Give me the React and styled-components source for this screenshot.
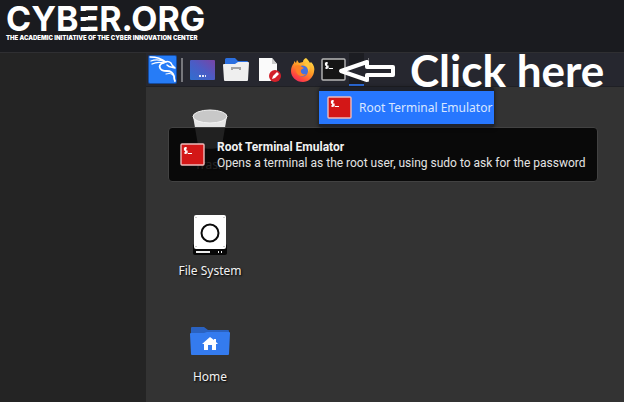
import React from 'react';
import styled, { createGlobalStyle } from 'styled-components';

const GlobalStyle = createGlobalStyle`
  * {
    box-sizing: border-box;
  }

  body {
    margin: 0;
    background: #242424;
    font-family: 'Noto Sans', 'Open Sans', sans-serif;
    font-size: 12px;
    line-height: 16px;
    color: #fff;
  }
`;

const Page = styled.div`
  display: flex;
  flex-direction: column;
  min-height: 100vh;
`;

const Header = styled.header`
  height: 53px;
  padding: 4px 6px 0;
  background: #1a1b1f;
  border-bottom: 1px solid #2f2f32;
  font-family: Inter, sans-serif;
  white-space: nowrap;
`;

const Brand = styled.h1`
  margin: 0;
  font-size: 34px;
  font-weight: 700;
  line-height: 30px;
`;

// the E of the logo has no stem, only its three bars
const BarLetter = styled.span`
  position: relative;

  &::before,
  &::after {
    content: '';
    position: absolute;
    left: 0;
    width: 9px;
    height: 6px;
    background: #1a1b1f;
  }

  &::before {
    top: 13px;
  }

  &::after {
    top: 23px;
  }
`;

const Tagline = styled.p`
  margin: 0;
  font-size: 6px;
  font-weight: 900;
  line-height: 8px;
`;

const Body = styled.div`
  flex: 1;
  display: flex;
`;

const Sidebar = styled.aside`
  flex: 0 0 146px;
  background: #242424;
`;

const Main = styled.main`
  position: relative;
  flex: 1;
  min-width: 0;
  display: flex;
  flex-direction: column;
  background: #333;
`;

const Panel = styled.nav`
  display: flex;
  align-items: center;
  height: 34px;
  padding-left: 2px;
  background: #26272f;
  border-bottom: 1px solid #1f2025;
`;

const PanelButton = styled.button`
  display: flex;
  align-items: center;
  justify-content: center;
  flex: none;
  width: ${props => props.$width || 34}px;
  height: 33px;
  padding: 0;
  border: 0;
  border-bottom: ${props => (props.$active ? '2px solid #2b69d6' : '0')};
  background: ${props => (props.$active ? '#1c1d22' : 'transparent')};
`;

const Separator = styled.span`
  flex: none;
  width: ${props => props.$width}px;
  height: 24px;
  margin: 0 2px 0 4px;
  background: #77787d;
`;

const Annotation = styled.div`
  position: absolute;
  top: 0;
  left: 191px;
  display: flex;
  align-items: center;
  gap: 14px;
  height: 34px;
  font-family: Lato, sans-serif;
  font-size: 44px;
  font-weight: 700;
  line-height: 34px;
  white-space: nowrap;
`;

const Launcher = styled.div`
  position: absolute;
  top: 34px;
  left: 173px;
  padding: 4px 0 3px;
  background: #1f222b;
  border-radius: 3px;
  box-shadow: 0 1px 4px rgba(0, 0, 0, 0.6);
`;

const LauncherItem = styled.button`
  display: flex;
  align-items: center;
  gap: 7px;
  height: 33px;
  padding: 0 2px 0 8px;
  border: 0;
  background: #2777ff;
  color: #d9e6ff;
  font: inherit;
  white-space: nowrap;
`;

const Tooltip = styled.div`
  position: absolute;
  top: 74px;
  left: 22px;
  display: flex;
  align-items: center;
  gap: 12px;
  height: 55px;
  padding: 0 11px;
  border: 1px solid #424242;
  border-radius: 4px;
  background: rgba(4, 4, 4, 0.87);
  color: #e4e4e4;
  font-family: Roboto, 'Noto Sans', sans-serif;
  white-space: nowrap;
`;

const TooltipTitle = styled.strong`
  display: block;
  color: #f2f2f2;
`;

const Shortcuts = styled.ul`
  display: flex;
  flex-direction: column;
  gap: 40px;
  width: 80px;
  margin: 22px 0 0 24px;
  padding: 0;
  list-style: none;
`;

const Shortcut = styled.li`
  display: flex;
  flex-direction: column;
  align-items: center;
  gap: 8px;
  height: 66px;
  color: #f2f2f2;
  text-shadow: 1px 1px 2px #000;
  white-space: nowrap;
`;

const KaliIcon = () => (
  <svg width="29" height="29" viewBox="0 0 29 29">
    <rect width="29" height="29" rx="2" fill="#164c9f" />
    <rect x="1" y="1" width="27" height="27" rx="1" fill="#267cf7" />
    <g fill="none" stroke="#fff" strokeLinecap="round" strokeLinejoin="round">
      <path d="M2 2c6 0 11 1 16 5M3 6c5-2 10-1 14 1M4 9c4-2 8-2 12-1" strokeWidth="1.3" />
      <path d="M17 7c3-1 6 0 7 3l3 3-4-1c-2 0-3-1-4-2" strokeWidth="1.5" />
      <path
        d="M15 8c-3 1-4 3-3 5 1 3 4 3 7 3 4 0 6 2 7 5 0 2 0 3 1 5"
        strokeWidth="1.8"
      />
      <path d="M25 20c-2-2-4-2-7-1" strokeWidth="1.1" />
    </g>
  </svg>
);

const DesktopIcon = () => (
  <svg width="25" height="20" viewBox="0 0 25 20">
    <defs>
      <linearGradient id="screen" x1="0" y1="1" x2="1" y2="0">
        <stop offset="0" stopColor="#2f6fd0" />
        <stop offset="0.5" stopColor="#4b5cc5" />
        <stop offset="1" stopColor="#7944a5" />
      </linearGradient>
    </defs>
    <rect width="25" height="20" rx="1" fill="url(#screen)" />
    <path d="M9 15h2v2H9zM12 15h2v2h-2zM15 15h1v2h-1z" fill="#e3e5f6" />
  </svg>
);

const FilesIcon = () => (
  <svg width="26" height="23" viewBox="0 0 26 23">
    <path d="M2 1.5Q2 0 3.5 0H12l3 3h9q1 0 1 1v9H2z" fill="#2b6fe0" />
    <path d="M0 7q0-1 1-1h11l3-2h10q1 0 1 1l-1 17q0 1-1 1H2q-1 0-1-1z" fill="#efefef" />
    <path d="M9 12v-2h8v2" fill="none" stroke="#a3a3a3" strokeWidth="2" />
  </svg>
);

const DocumentIcon = () => (
  <svg width="24" height="26" viewBox="0 0 24 26">
    <path d="M1 1h13l5 6v17H1z" fill="#fafafa" />
    <path d="M14 1v6h5z" fill="#ccc" />
    <circle cx="17" cy="19" r="6" fill="#d3202a" />
    <path d="m14 22 1-3 4-4 2 2-4 4z" fill="#fff" />
  </svg>
);

const FirefoxIcon = () => (
  <svg width="24" height="24" viewBox="0 0 24 24">
    <defs>
      <linearGradient id="flame" x1="0.8" y1="0" x2="0.2" y2="1">
        <stop offset="0" stopColor="#ffe14a" />
        <stop offset="0.45" stopColor="#ff9a25" />
        <stop offset="0.8" stopColor="#ff4540" />
        <stop offset="1" stopColor="#ec2661" />
      </linearGradient>
    </defs>
    <path
      d="M15 0c2 2 3 3 4 5l1-1c3 3 4 6 3 10-1 6-6 10-11 10C5 24 0 19 0 13c0-3 1-6 3-8V3l2 2 1-3 2 3 4-1c0-2 1-3 3-4z"
      fill="url(#flame)"
    />
    <circle cx="11.5" cy="13" r="5.5" fill="#4571df" />
    <path d="M4 8c2-1 5-1 7 1l2 1c-1 1-3 1-3 2-1 3 2 5 5 4-3 4-10 2-10-4z" fill="#ff8124" />
    <path d="M13 7c3 1 5 4 4 7 2-2 2-5 1-7l-3-2z" fill="#ffc63a" />
  </svg>
);

const TerminalIcon = ({ fill = '#d31717', stroke = '#eebbbb' }) => (
  <svg width="25" height="23" viewBox="0 0 25 23">
    <rect x="1" y="1" width="23" height="21" rx="1" fill={fill} stroke={stroke} strokeWidth="1.4" />
    <path
      d="M7 5H4.500v2L7 8v2H4M5.700 4v7M8 10.500h4"
      fill="none"
      stroke="#fff"
      strokeWidth="1.2"
    />
  </svg>
);

const ArrowIcon = () => (
  <svg width="59" height="24" viewBox="0 0 59 24">
    <path
      d="M4 13 30 4v5h26v8H30v5z"
      fill="#26272f"
      stroke="#fff"
      strokeWidth="4"
      strokeLinejoin="round"
    />
  </svg>
);

const TrashIcon = () => (
  <svg width="36" height="40" viewBox="0 0 36 40">
    <path d="M1 7l5 29c1 5 23 5 24 0l5-29z" fill="#e6e6e6" />
    <ellipse cx="18" cy="7.500" rx="17" ry="6.500" fill="#c8c8c8" stroke="#f3f3f3" />
  </svg>
);

const DiskIcon = () => (
  <svg width="34" height="40" viewBox="0 0 34 40">
    <rect y="29" width="34" height="11" rx="2" fill="#080808" />
    <rect x="1" width="32" height="34" rx="2" fill="#fff" />
    <circle cx="17" cy="18" r="8.500" fill="#fff" stroke="#0b0b0b" strokeWidth="2" />
    <path d="M3 36h14v2H3zM25 36h1v2h-1zM28 36h1v2h-1z" fill="#eee" />
    <path d="M2.500 2h1v1h-1zM30.500 2h1v1h-1zM2.500 31h1v1h-1zM30.500 31h1v1h-1z" fill="#999" />
  </svg>
);

const HomeIcon = () => (
  <svg width="40" height="40" viewBox="0 0 40 40">
    <path d="M1 7q0-1 1-1h12l4 3h20q1 0 1 1v8H1z" fill="#2a62c1" />
    <path d="M0 13q0-1 1-1h13l3-1h22q1 0 1 1l-1 21q0 1-1 1H2q-1 0-1-1z" fill="#347bef" />
    <path d="m20 16-8 7h2v6h4v-5h4v5h4v-6h2l-2-2v-3h-2v1z" fill="#fff" />
  </svg>
);

const shortcuts = [
  { label: 'Trash', Icon: TrashIcon },
  { label: 'File System', Icon: DiskIcon },
  { label: 'Home', Icon: HomeIcon },
];

const App = () => (
  <Page>
    <GlobalStyle />
    <Header>
      <Brand>
        CYB<BarLetter>E</BarLetter>R.ORG
      </Brand>
      <Tagline>THE ACADEMIC INITIATIVE OF THE CYBER INNOVATION CENTER</Tagline>
    </Header>

    <Body>
      <Sidebar />
      <Main>
        <Panel>
          <PanelButton $width={29} aria-label="Applications">
            <KaliIcon />
          </PanelButton>
          <Separator $width={2} />
          <PanelButton aria-label="Show desktop">
            <DesktopIcon />
          </PanelButton>
          <PanelButton aria-label="Files">
            <FilesIcon />
          </PanelButton>
          <PanelButton aria-label="Text editor">
            <DocumentIcon />
          </PanelButton>
          <PanelButton $width={31} aria-label="Firefox">
            <FirefoxIcon />
          </PanelButton>
          <PanelButton $width={31} aria-label="Terminal">
            <TerminalIcon fill="#151515" stroke="#b8b8b8" />
          </PanelButton>
          <PanelButton $width={15} $active aria-label="More terminals" />
          <Separator $width={1} />
        </Panel>

        <Shortcuts>
          {shortcuts.map(({ label, Icon }) => (
            <Shortcut key={label}>
              <Icon />
              {label}
            </Shortcut>
          ))}
        </Shortcuts>

        <Tooltip role="tooltip">
          <TerminalIcon />
          <div>
            <TooltipTitle>Root Terminal Emulator</TooltipTitle>
            Opens a terminal as the root user, using sudo to ask for the password
          </div>
        </Tooltip>

        <Launcher>
          <LauncherItem>
            <TerminalIcon />
            Root Terminal Emulator
          </LauncherItem>
        </Launcher>

        <Annotation>
          <ArrowIcon />
          Click here
        </Annotation>
      </Main>
    </Body>
  </Page>
);

export default App;
